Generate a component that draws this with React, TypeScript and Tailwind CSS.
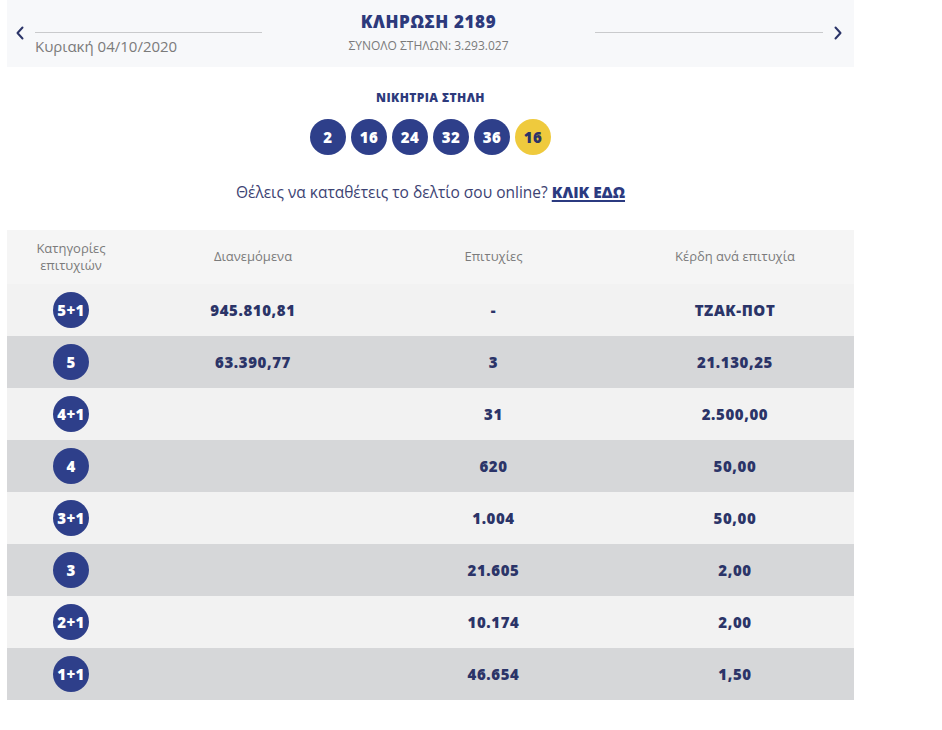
import React from "react";

function Chevron({ dir }: { dir: "left" | "right" }) {
  return (
    <svg width="10" height="14" viewBox="0 0 10 14" fill="none">
      <path
        d={dir === "left" ? "M7.5 1.5 L2.5 7 L7.5 12.5" : "M2.5 1.5 L7.5 7 L2.5 12.5"}
        stroke="#2b3468"
        strokeWidth="2"
        strokeLinecap="round"
        strokeLinejoin="round"
      />
    </svg>
  );
}

const rows = [
  { cat: "5+1", dist: "945.810,81", wins: "-", prize: "ΤΖΑΚ-ΠΟΤ" },
  { cat: "5", dist: "63.390,77", wins: "3", prize: "21.130,25" },
  { cat: "4+1", dist: "", wins: "31", prize: "2.500,00" },
  { cat: "4", dist: "", wins: "620", prize: "50,00" },
  { cat: "3+1", dist: "", wins: "1.004", prize: "50,00" },
  { cat: "3", dist: "", wins: "21.605", prize: "2,00" },
  { cat: "2+1", dist: "", wins: "10.174", prize: "2,00" },
  { cat: "1+1", dist: "", wins: "46.654", prize: "1,50" },
];

export default function App() {
  return (
    <div className="w-[942px] h-[730px] bg-white font-['Open_Sans',sans-serif]">
      <div className="ml-[7px] w-[847px]">
        {/* Top bar */}
        <div className="flex h-[67px] bg-[#f7f8fa]">
          <div className="w-[28px] flex justify-center pt-[26px] pr-[2px]">
            <Chevron dir="left" />
          </div>
          <div className="w-[227px] pt-[32px]">
            <div className="h-px bg-[#c9cacc]" />
            <div className="mt-[3px] text-[15px] leading-[20px] text-[#7b7b7b]">Κυριακή 04/10/2020</div>
          </div>
          <div className="w-[333px] flex flex-col items-center pt-[10px]">
            <div className="text-[17px] leading-[24px] font-extrabold text-[#2d3a7c] tracking-[0.6px]">ΚΛΗΡΩΣΗ 2189</div>
            <div className="mt-[4px] text-[12px] leading-[16px] text-[#7b7b7b]">ΣΥΝΟΛΟ ΣΤΗΛΩΝ: 3.293.027</div>
          </div>
          <div className="w-[228px] pt-[32px]">
            <div className="h-px bg-[#c9cacc]" />
          </div>
          <div className="flex-1 flex justify-center pt-[26px] pr-[2px]">
            <Chevron dir="right" />
          </div>
        </div>

        {/* Winning column */}
        <div className="mt-[23px] text-center text-[12px] leading-[16px] font-extrabold text-[#2d3a7c] tracking-[0.4px]">
          ΝΙΚΗΤΡΙΑ ΣΤΗΛΗ
        </div>
        <div className="mt-[13px] flex justify-center gap-[5px]">
          {["2", "16", "24", "32", "36"].map((n, i) => (
            <div
              key={i}
              className="w-[36px] h-[36px] rounded-full bg-[#2e3f8a] flex items-center justify-center text-white text-[15px] font-extrabold tracking-[0.5px]"
            >
              {n}
            </div>
          ))}
          <div className="w-[36px] h-[36px] rounded-full bg-[#efca3d] flex items-center justify-center text-[#2b3468] text-[15px] font-extrabold tracking-[0.5px]">
            16
          </div>
        </div>

        <div className="mt-[25px] text-center text-[15.5px] leading-[24px] text-[#3d4373]">
          Θέλεις να καταθέτεις το δελτίο σου online?{" "}
          <span className="font-extrabold text-[#2b3a80] underline underline-offset-2 decoration-2">ΚΛΙΚ ΕΔΩ</span>
        </div>

        {/* Table */}
        <div className="mt-[26px]">
          <div className="flex h-[54px] bg-[#f5f5f5] items-center text-[13px] text-[#7b7b7b]">
            <div className="w-[128px] text-center leading-[17px]">
              Κατηγορίες
              <br />
              επιτυχιών
            </div>
            <div className="w-[236px] text-center">Διανεμόμενα</div>
            <div className="w-[245px] text-center">Επιτυχίες</div>
            <div className="flex-1 text-center">Κέρδη ανά επιτυχία</div>
          </div>
          {rows.map((r, i) => (
            <div
              key={i}
              className={`flex h-[52px] items-center text-[15px] font-extrabold tracking-[0.6px] text-[#2b3468] ${
                i % 2 === 0 ? "bg-[#f2f2f2]" : "bg-[#d6d7d9]"
              }`}
            >
              <div className="w-[128px] flex justify-center">
                <div className="w-[36px] h-[36px] rounded-full bg-[#2e3f8a] flex items-center justify-center text-white text-[15px] font-extrabold tracking-[0.3px]">
                  {r.cat}
                </div>
              </div>
              <div className="w-[236px] text-center">{r.dist}</div>
              <div className="w-[245px] text-center">{r.wins}</div>
              <div className="flex-1 text-center">{r.prize}</div>
            </div>
          ))}
        </div>
      </div>
    </div>
  );
}
